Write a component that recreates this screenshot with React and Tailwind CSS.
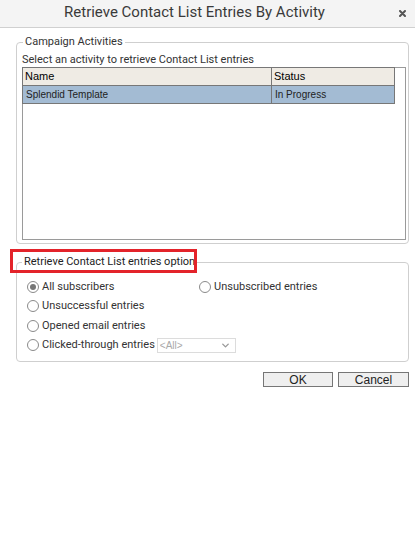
import { ChevronDown } from "lucide-react";

const Radio = ({ checked, label, className = "" }) => (
    <label className={`flex items-center h-[19.5px] ${className}`}>
        <span className="w-[12px] h-[12px] rounded-full border border-[#8a8a8a] bg-white flex items-center justify-center shrink-0">
            {checked && <span className="w-[6px] h-[6px] rounded-full bg-[#767676]" />}
        </span>
        <span className="ml-[3px] text-[11px] text-[#333]">{label}</span>
    </label>
);

const App = () => {
    return (
        <div className="w-[415px] h-[536px] bg-white font-['Roboto',sans-serif] text-[#333]">
            {/* title bar */}
            <div className="relative h-[28px] bg-[#f4f4f4] border-b border-[#d0d0d0] flex items-center justify-center pr-[26px]">
                <h1 className="text-[15px] leading-none text-[#3a3a3a] -mt-[3px]">Retrieve Contact List Entries By Activity</h1>
                <svg className="absolute right-[9px] top-[10px]" width="7" height="7" viewBox="0 0 7 7">
                    <path d="M1 1 L6 6 M6 1 L1 6" stroke="#555" strokeWidth="2" strokeLinecap="round" />
                </svg>
            </div>

            <div className="pl-[16px] pr-[6px]">
                <fieldset className="mt-[7px] border border-[#cfcfcf] rounded-[4px] pl-[5px] pr-[2px] pb-[3px]">
                    <legend className="ml-[1px] px-[2px] text-[11px] leading-[14px]">Campaign Activities</legend>
                    <p className="mt-[4px] text-[11px] leading-[14px]">Select an activity to retrieve Contact List entries</p>
                    <div className="h-[173px] border border-[#9a9a9a] bg-white">
                        <table className="w-[373px] border-collapse font-['Liberation_Sans',Arial,sans-serif] -mt-px -ml-px">
                            <thead>
                                <tr className="h-[18px] bg-[#efebe4]">
                                    <th className="w-[249px] border border-[#777] text-left font-normal text-[11px] text-black pl-[2px]">Name</th>
                                    <th className="border border-[#777] text-left font-normal text-[11px] text-black pl-[2px]">Status</th>
                                </tr>
                            </thead>
                            <tbody>
                                <tr className="h-[18px] bg-[#a3bbd3]">
                                    <td className="border border-[#777] text-[10px] text-[#222] pl-[3px]">Splendid Template</td>
                                    <td className="border border-[#777] text-[10px] text-[#222] pl-[3px]">In Progress</td>
                                </tr>
                            </tbody>
                        </table>
                    </div>
                </fieldset>

                <div className="relative mt-[11px]">
                    <fieldset className="border border-[#cfcfcf] rounded-[4px] pl-[10px] pb-[6px]">
                        <legend className="-ml-[5px] px-[2px] text-[11px] leading-[14px] text-[#222]">Retrieve Contact List entries option</legend>
                        <div className="mt-[8px] flex">
                            <Radio checked label="All subscribers" className="w-[172px]" />
                            <Radio label="Unsubscribed entries" />
                        </div>
                        <Radio label="Unsuccessful entries" />
                        <Radio label="Opened email entries" />
                        <div className="flex items-center">
                            <Radio label="Clicked-through entries" />
                            <div className="ml-[2px] w-[79px] h-[15px] border border-[#dcdcdc] flex items-center justify-between px-[2px] font-['Liberation_Sans',Arial,sans-serif] text-[10px] text-[#a9a9a9]">
                                <span>&lt;All&gt;</span>
                                <ChevronDown size={11} strokeWidth={3} className="text-[#999] mr-[2px]" />
                            </div>
                        </div>
                    </fieldset>
                    <div className="absolute left-[-6px] top-[-6px] w-[187px] h-[24px] border-[3px] border-[#e3232a]" />
                </div>

                <div className="mt-[10px] flex justify-end gap-[5px]">
                    <button className="w-[70px] h-[15px] bg-[#efefef] border border-[#767676] text-[12px] leading-none text-[#222] font-['Liberation_Sans',Arial,sans-serif]">OK</button>
                    <button className="w-[71px] h-[15px] bg-[#efefef] border border-[#767676] text-[12px] leading-none text-[#222] font-['Liberation_Sans',Arial,sans-serif]">Cancel</button>
                </div>
            </div>
        </div>
    );
};

export default App;
